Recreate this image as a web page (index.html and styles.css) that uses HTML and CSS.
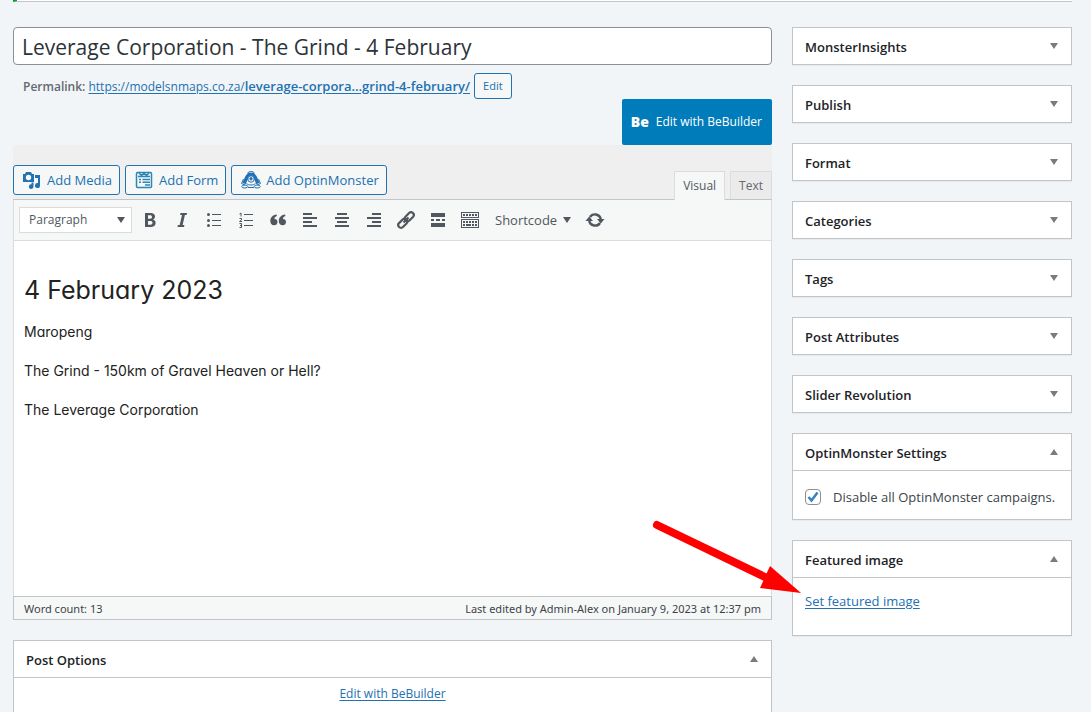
FILE: index.html
```html
<!DOCTYPE html>
<html lang="en">
<head>
<meta charset="utf-8">
<meta name="viewport" content="width=device-width, initial-scale=1">
<title>Edit Post</title>
<link rel="stylesheet" href="styles.css">
</head>
<body>
<div class="notice"></div>
<div class="page">
  <main class="main">
    <input class="title" type="text" aria-label="Title" value="Leverage Corporation - The Grind - 4 February">
    <div class="permalink">
      <span><strong>Permalink:</strong> <a href="#">https://modelsnmaps.co.za/<b>leverage-corpora…grind-4-february/</b></a></span>
      <button class="btn btn-small" type="button">Edit</button>
    </div>
    <a class="builder" href="#"><span class="be">Be</span>Edit with BeBuilder</a>

    <section class="editor">
      <div class="tools">
        <div class="media">
          <button class="btn" type="button">
            <svg class="icon" viewBox="0 0 18 18" fill="currentColor"><path fill-rule="evenodd" d="M0 3h2l1-2h5l1 2h2v8H0zM5.500 3.800a2.700 2.700 0 1 0 0 5.400 2.700 2.700 0 0 0 0-5.400z"/><path d="M12 4h5v10.500a2.500 2.500 0 1 1-2-2.400V7h-3zM8.500 11.500h2v4a2.300 2.300 0 1 1-2-2.200z"/></svg>Add Media</button>
          <button class="btn" type="button">
            <svg class="icon form-icon" viewBox="0 0 18 18" fill="none" stroke="currentColor" stroke-width="1.500"><rect x="1.500" y="1.500" width="15" height="15" rx="1"/><path d="M4 2l2.500 2.500L9 2l2.500 2.500L14 2M3 5.500h12M7.500 8.500H15M7.500 11.200H15M10 14h5M4 8.500h2M4 11.200h2"/></svg>Add Form</button>
          <button class="btn" type="button">
            <svg class="icon wide" viewBox="0 0 20 18" fill="none" stroke="currentColor"><path d="M3 12.500L6 6l2-2.500h4L14 6l3 6.500" stroke-width="3.500"/><ellipse cx="10" cy="1.800" rx="3" ry="1.200"/><circle cx="10" cy="8" r="3.200" fill="#f6f7f7"/><circle cx="10" cy="7.800" r="1.200" fill="currentColor"/><path d="M5.500 12.500c2 2 7 2 9 0M2.500 8L.5 12.500 4 14M17.500 8l2 4.500L16 14"/><ellipse cx="3.800" cy="15.500" rx="3" ry="1.500"/><ellipse cx="16.200" cy="15.500" rx="3" ry="1.500"/><path d="M7 16.500h6"/></svg>Add OptinMonster</button>
        </div>
        <div class="tabs">
          <button class="tab active" type="button">Visual</button>
          <button class="tab" type="button">Text</button>
        </div>
      </div>
      <div class="toolbar">
        <div class="select"><select aria-label="Block format"><option>Paragraph</option></select></div>
        <button class="tool" type="button" aria-label="Bold"><svg viewBox="0 0 20 20"><path fill-rule="evenodd" d="M5 3h5.500c3 0 4.500 1.300 4.500 3.600 0 1.500-.8 2.600-2 3 1.600.4 2.600 1.600 2.600 3.300 0 2.700-1.900 4.100-5 4.100H5zM8 5.300v3.400h2.200c1.200 0 1.800-.6 1.800-1.700s-.7-1.700-1.900-1.700zM8 11v3.700h2.500c1.300 0 2-.6 2-1.900S11.700 11 10.400 11z"/></svg></button>
        <button class="tool" type="button" aria-label="Italic"><svg viewBox="0 0 20 20"><path d="M8.500 3H15l-.4 2h-1.700l-2.300 10h1.800l-.4 2H5.500l.4-2h1.800L10 5H8.100z"/></svg></button>
        <button class="tool" type="button" aria-label="Bulleted list"><svg viewBox="0 0 20 20"><circle cx="4.500" cy="4.500" r="1.500"/><circle cx="4.500" cy="10.500" r="1.500"/><circle cx="4.500" cy="15.500" r="1.500"/><path d="M8 4h9v1H8zM8 10h9v1H8zM8 15h9v1H8z"/></svg></button>
        <button class="tool" type="button" aria-label="Numbered list"><svg viewBox="0 0 20 20"><path d="M8 4h9v1H8zM8 10h9v1H8zM8 15h9v1H8z"/><path fill="none" stroke="currentColor" d="M3.500 4L5 3v3.500M3.500 8.500h2v1.500l-2 1.500H6M3.500 13.500h2v4h-2M4 15.500h1.500"/></svg></button>
        <button class="tool" type="button" aria-label="Blockquote"><svg viewBox="0 0 20 20"><path d="M8.500 4.500L9 6c-1.800.5-2.600 1.500-2.600 3 2 0 3.100 1.300 3.100 3 0 2-1.400 3.300-3.400 3.300-2.400 0-3.800-1.700-3.800-4.300 0-3.500 2.300-6 6.200-6.500zM17 4.500l.5 1.500c-1.800.5-2.600 1.500-2.600 3 2 0 3.100 1.300 3.100 3 0 2-1.400 3.300-3.400 3.300-2.400 0-3.800-1.700-3.800-4.300 0-3.500 2.300-6 6.200-6.500z"/></svg></button>
        <button class="tool" type="button" aria-label="Align left"><svg viewBox="0 0 20 20"><path d="M3 3h9v2H3zM3 7h14v2H3zM3 11h9v2H3zM3 15h14v2H3z"/></svg></button>
        <button class="tool" type="button" aria-label="Align center"><svg viewBox="0 0 20 20"><path d="M5 3h10v2H5zM3 7h14v2H3zM5 11h10v2H5zM3 15h14v2H3z"/></svg></button>
        <button class="tool" type="button" aria-label="Align right"><svg viewBox="0 0 20 20"><path d="M8 3h9v2H8zM3 7h14v2H3zM8 11h9v2H8zM3 15h14v2H3z"/></svg></button>
        <button class="tool" type="button" aria-label="Insert link"><svg viewBox="0 0 20 20" fill="none" stroke="currentColor" stroke-width="2.200"><rect x="8" y="4" width="10.500" height="5.500" rx="2.700" transform="rotate(-45 13.300 6.800)"/><rect x="1.500" y="10.500" width="10.500" height="5.500" rx="2.700" transform="rotate(-45 6.800 13.200)"/><path d="M7.500 12.500l5-5"/></svg></button>
        <button class="tool" type="button" aria-label="Read more"><svg viewBox="0 0 20 20"><path d="M3 3h14v4H3zM3 9h3v2H3zM8 9h4v2H8zM14 9h3v2h-3zM3 13h14v4H3z"/></svg></button>
        <button class="tool" type="button" aria-label="Toolbar toggle"><svg viewBox="0 0 20 20"><path fill-rule="evenodd" d="M1 2h18v6H1zM2 3v4h16V3zM1 9h18v9H1zM2 10v7h16v-7z"/><path d="M3 4h2v2H3zM6 4h2v2H6zM9 4h2v2H9zM12 4h2v2h-2zM15 4h2v2h-2zM3 11h2v2H3zM6 11h2v2H6zM9 11h2v2H9zM12 11h2v2h-2zM15 11h2v2h-2zM3 14h2v2H3zM6 14h5v2H6zM12 14h2v2h-2zM15 14h2v2h-2z"/></svg></button>
        <button class="shortcode" type="button">Shortcode<span class="caret"></span></button>
        <button class="tool" type="button" aria-label="Refresh"><svg viewBox="0 0 20 20"><path fill="none" stroke="currentColor" stroke-width="2.400" d="M5 7a6 6 0 0 1 10.800 2M15 13a6 6 0 0 1-10.800-2"/><path d="M12 9h7.500l-3.700 4.500zM.5 11H8L4.200 6.500z"/></svg></button>
      </div>
      <article class="content" contenteditable="true" spellcheck="false">
        <h2>4 February 2023</h2>
        <p>Maropeng</p>
        <p>The Grind - 150km of Gravel Heaven or Hell?</p>
        <p>The Leverage Corporation</p>
      </article>
      <footer class="status"><span>Word count: 13</span><span>Last edited by Admin-Alex on January 9, 2023 at 12:37 pm</span></footer>
    </section>

    <section class="box options">
      <h2 class="box-head">Post Options<button class="toggle up" type="button" aria-label="Toggle Post Options"></button></h2>
      <div class="options-body"><a href="#">Edit with BeBuilder</a></div>
    </section>
  </main>

  <aside class="side">
    <section class="box"><h2 class="box-head">MonsterInsights<button class="toggle" type="button" aria-label="Toggle MonsterInsights"></button></h2></section>
    <section class="box"><h2 class="box-head">Publish<button class="toggle" type="button" aria-label="Toggle Publish"></button></h2></section>
    <section class="box"><h2 class="box-head">Format<button class="toggle" type="button" aria-label="Toggle Format"></button></h2></section>
    <section class="box"><h2 class="box-head">Categories<button class="toggle" type="button" aria-label="Toggle Categories"></button></h2></section>
    <section class="box"><h2 class="box-head">Tags<button class="toggle" type="button" aria-label="Toggle Tags"></button></h2></section>
    <section class="box"><h2 class="box-head">Post Attributes<button class="toggle" type="button" aria-label="Toggle Post Attributes"></button></h2></section>
    <section class="box"><h2 class="box-head">Slider Revolution<button class="toggle" type="button" aria-label="Toggle Slider Revolution"></button></h2></section>
    <section class="box">
      <h2 class="box-head">OptinMonster Settings<button class="toggle up" type="button" aria-label="Toggle OptinMonster Settings"></button></h2>
      <div class="box-body"><label class="check"><span class="tick"><input type="checkbox" checked><svg viewBox="0 0 16 16"><path d="M3.500 8l3 3.500 6-8" fill="none" stroke="#3582c4" stroke-width="2.500"/></svg></span>Disable all OptinMonster campaigns.</label></div>
    </section>
    <section class="box featured">
      <h2 class="box-head">Featured image<button class="toggle up" type="button" aria-label="Toggle Featured image"></button></h2>
      <div class="box-body image-body"><a href="#">Set featured image</a></div>
      <svg class="arrow" viewBox="0 0 150 76" aria-hidden="true"><path d="M6 6l110 53" stroke="#f00" stroke-width="8" stroke-linecap="round"/><path d="M119 47l31 27-41-5z" fill="#f00"/></svg>
    </section>
  </aside>
</div>
</body>
</html>
```
FILE: styles.css
```css
* { box-sizing: border-box; }

body {
  margin: 0;
  min-height: 100vh;
  display: flex;
  flex-direction: column;
  background: #f1f5f8;
  color: #3c434a;
  font: 13px/20px "Open Sans", "Noto Sans", sans-serif;
}

button, input, select { font: inherit; color: inherit; margin: 0; }
button { cursor: pointer; }
a { color: #2271b1; text-underline-offset: 2px; }
h2, p { margin: 0; }

.notice {
  height: 2px;
  margin: 0 19px 0 13px;
  background: #fff;
  border-bottom: 1px solid #c3c4c7;
  border-left: 4px solid #00a32a;
}

.page {
  flex: 1;
  display: grid;
  grid-template-columns: minmax(0, 1fr) 280px;
  gap: 20px;
  padding: 25px 19px 0 13px;
}

.main { display: flex; flex-direction: column; }

.title {
  width: 100%;
  height: 38px;
  padding: 1px 8px 0;
  border: 1px solid #8c8f94;
  border-radius: 4px;
  background: #fff;
  color: #2c3338;
  font-size: 21px;
}

.permalink {
  display: flex;
  align-items: center;
  gap: 4px;
  padding: 8px 10px 0;
  color: #646970;
  font-size: 12px;
}
.permalink strong, .permalink b { font-weight: 600; }
.permalink b { font-size: 13px; }

.btn {
  display: flex;
  align-items: center;
  height: 30px;
  padding: 0 7px;
  border: 1px solid #2271b1;
  border-radius: 3px;
  background: #f6f7f7;
  color: #2271b1;
  white-space: nowrap;
}
.btn-small { height: 26px; padding: 0 8px; font-size: 11px; }

.icon { width: 18px; height: 18px; margin: 0 6px 0 2px; }
.wide { width: 20px; margin-right: 5px; }
.form-icon { color: #2f86b5; }

.builder {
  align-self: flex-end;
  display: flex;
  align-items: center;
  gap: 7px;
  height: 46px;
  padding: 0 10px 0 9px;
  border-radius: 2px;
  background: #007cba;
  color: #fff;
  font-size: 12px;
  text-decoration: none;
}
.be { font-size: 14px; font-weight: 800; }

.tools {
  display: flex;
  justify-content: space-between;
  align-items: flex-end;
  padding-top: 20px;
  background: #efefef;
  border-bottom: 1px solid #c3c4c7;
}
.media { display: flex; gap: 5px; padding-bottom: 4px; }
.tabs { display: flex; gap: 5px; }
.tab {
  height: 28px;
  padding: 0 8px;
  border: 1px solid #dcdcde;
  border-bottom: 0;
  background: #ebebeb;
  color: #646970;
  font-size: 12px;
}
.tab.active { height: 29px; margin-bottom: -1px; background: #f6f7f7; color: #50575e; }

.toolbar {
  display: flex;
  flex-wrap: wrap;
  align-items: center;
  gap: 4px;
  min-height: 41px;
  padding: 0 5px;
  border: solid #dcdcde;
  border-width: 0 1px 1px;
  background: #f6f7f7;
  color: #50575e;
}
.select { position: relative; width: 113px; }
.select select {
  width: 100%;
  height: 26px;
  padding: 0 9px;
  border: 1px solid #dcdcde;
  border-radius: 0;
  background: #fff;
  font-size: 12px;
  appearance: none;
}
.select::after, .caret {
  content: "";
  border: solid transparent;
  border-width: 6px 4px 0;
  border-top-color: #50575e;
}
.select::after { position: absolute; right: 7px; top: 10px; pointer-events: none; }
.tool {
  width: 28px;
  height: 28px;
  padding: 4px;
  border: 0;
  background: none;
}
.tool svg { display: block; width: 20px; height: 20px; }
.tool svg:not([fill]) { fill: currentColor; }
.shortcode {
  display: flex;
  align-items: center;
  gap: 6px;
  padding: 0 6px 0 7px;
  border: 0;
  background: none;
}

.content {
  min-height: 355px;
  padding: 29px 10px;
  border: solid #dcdcde;
  border-width: 0 1px;
  background: #fff;
  color: #222;
  font: 14px/25px Inter, sans-serif;
  font-feature-settings: "cv11";
  outline: none;
}
.content h2 { margin-bottom: 9px; font-size: 25px; line-height: 40px; font-weight: 400; }
.content p { margin-bottom: 14px; }

.status {
  display: flex;
  justify-content: space-between;
  gap: 20px;
  padding: 2px 10px 0;
  height: 24px;
  border: 1px solid #c3c4c7;
  background: #f6f7f7;
  font-family: "Noto Sans", sans-serif;
  font-size: 11px;
}

.side { display: flex; flex-direction: column; gap: 20px; }

.box {
  background: #fff;
  border: 1px solid #c3c4c7;
  box-shadow: 0 1px 1px rgba(0, 0, 0, 0.04);
}
.box-head {
  display: flex;
  justify-content: space-between;
  align-items: center;
  height: 36px;
  padding: 2px 12px 0;
  color: #1d2327;
  font-size: 13px;
  font-weight: 600;
}
.toggle {
  display: flex;
  padding: 0 1px 2px;
  border: 0;
  background: none;
}
.toggle::before {
  content: "";
  border: solid transparent;
  border-width: 6px 4px 0;
  border-top-color: #787c82;
}
.toggle.up::before { border-width: 0 4px 6px; border-bottom-color: #787c82; }

.box-body { border-top: 1px solid #c3c4c7; padding: 16px 12px 12px; }
.check { display: flex; align-items: center; gap: 12px; white-space: nowrap; }
.tick { position: relative; width: 16px; height: 16px; }
.tick input {
  display: block;
  width: 16px;
  height: 16px;
  border: 1px solid #8c8f94;
  border-radius: 4px;
  background: #fff;
  appearance: none;
}
.tick svg { position: absolute; inset: 0; pointer-events: none; visibility: hidden; }
.tick input:checked + svg { visibility: visible; }

.featured { position: relative; }
.image-body { padding: 13px 12px 24px; }
.arrow {
  position: absolute;
  left: -142px;
  top: -22px;
  width: 150px;
  height: 76px;
  pointer-events: none;
}

.options { flex: 1; margin-top: 20px; border-bottom: 0; }
.options-body {
  border-top: 1px solid #c3c4c7;
  padding: 6px 12px;
  font-size: 12px;
  text-align: center;
}
```
